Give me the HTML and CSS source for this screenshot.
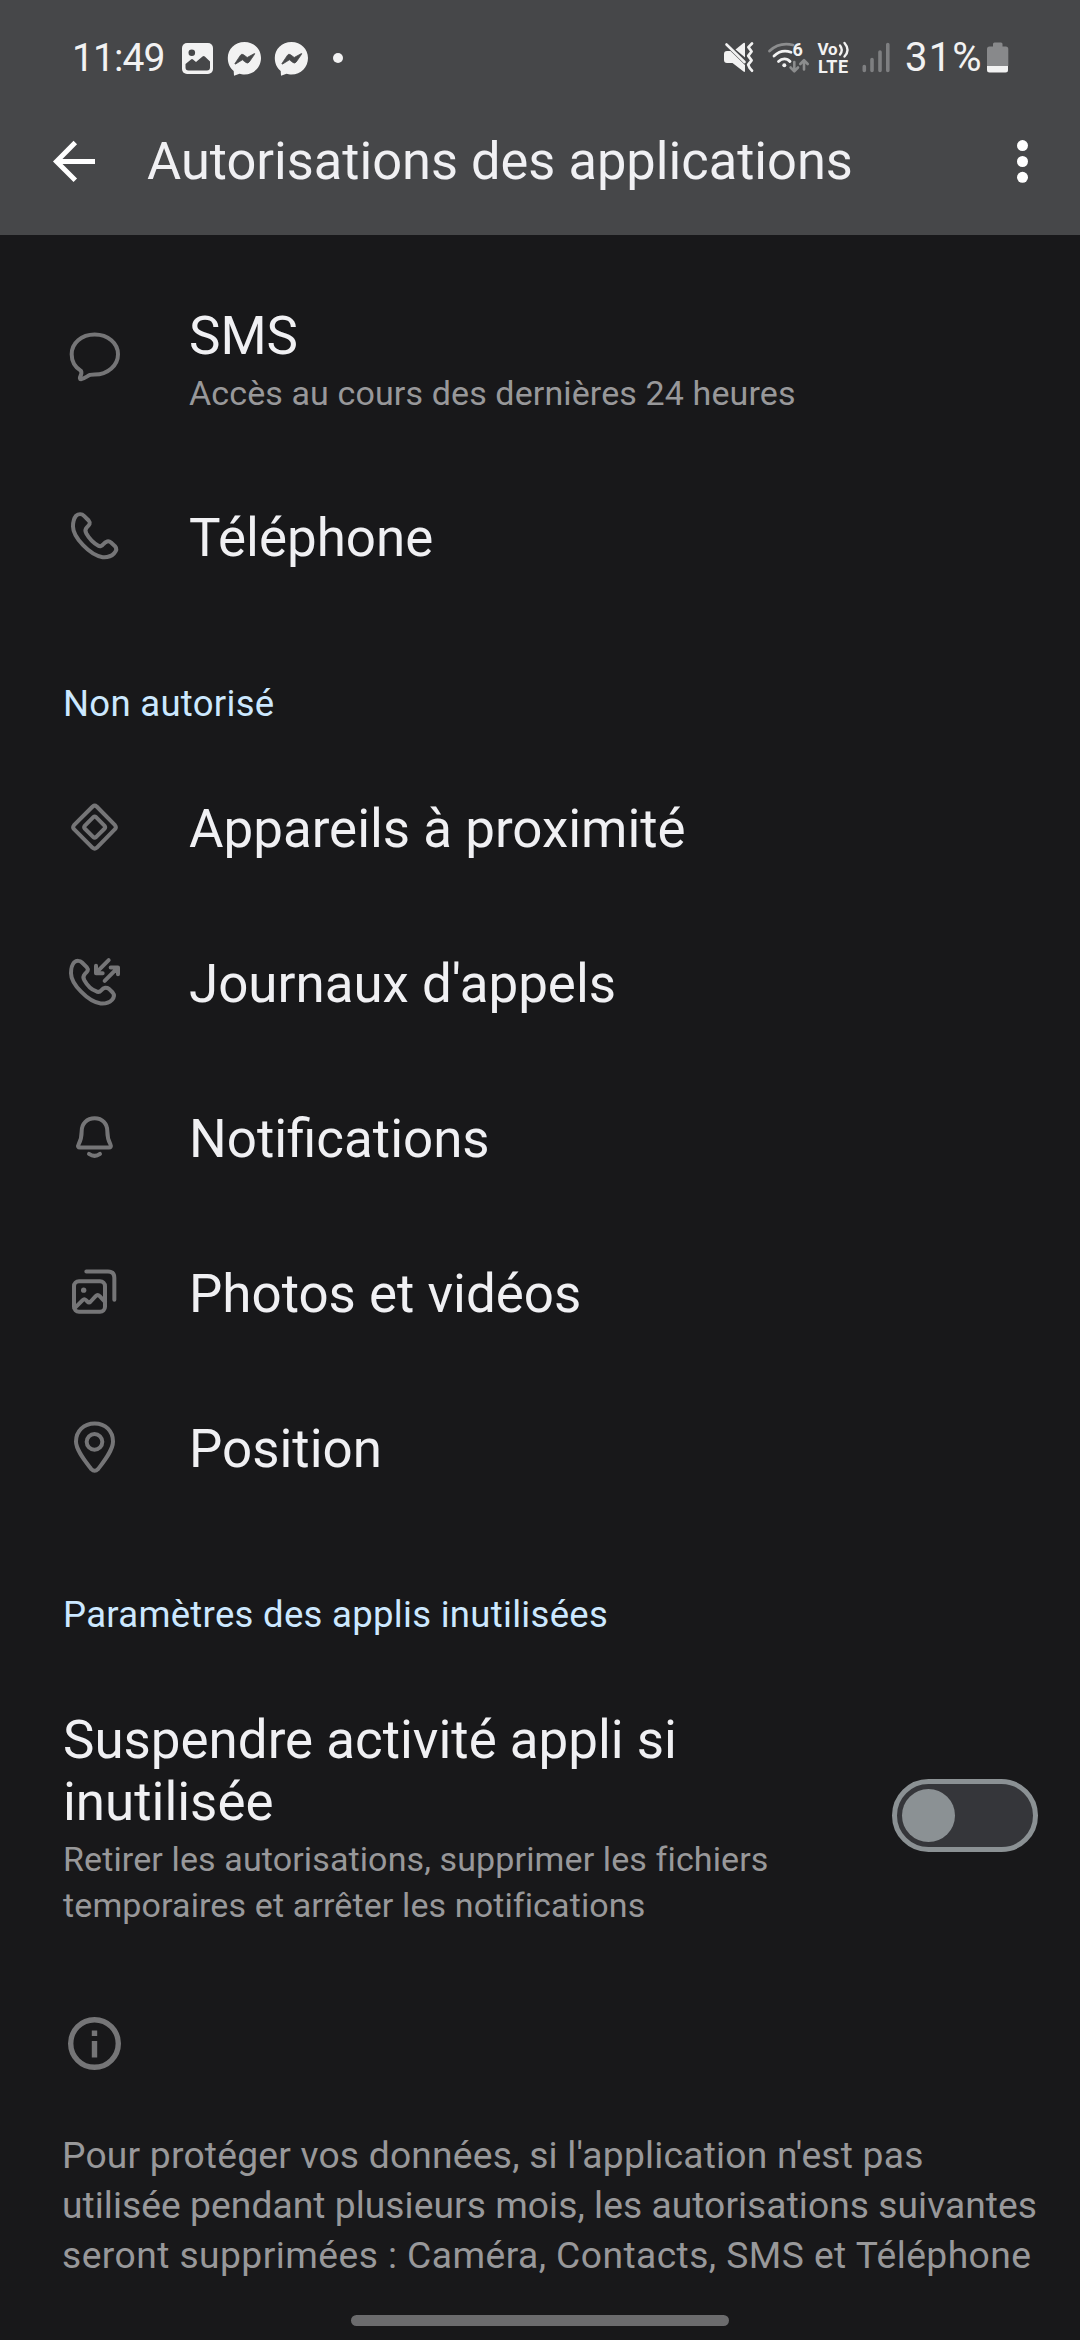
FILE: index.html
```html
<!DOCTYPE html>
<html lang="fr">
<head>
<meta charset="utf-8">
<title>Autorisations des applications</title>
<link rel="stylesheet" href="styles.css">
</head>
<body>
<header class="header">
  <div class="status">
    <div class="status-left">
      <span class="clock">11:49</span>
      <svg class="notif" viewBox="180 0 160 115" width="160" height="115">
        <rect x="182" y="43" width="31" height="31" rx="5" fill="#f2f2f2"/>
        <circle cx="191.8" cy="52.7" r="3.3" fill="#464749"/>
        <path d="M185.500 64l5.500-4.500q1-.8 2 0l3 2.600 6.500-5.700q1.200-1 2.300 0l5.200 5.100v6q0 3-3 3h-18.500q-3 0-3-3z" fill="#464749"/>
        <g id="bubble">
          <path d="M244.500 42c9.500 0 16.500 7 16.500 16s-7 16.500-16.500 16.500c-2 0-3.500-.2-5-.7l-5.500 2-.3-4.800c-3.700-3-5.900-7.500-5.900-13 0-9 7-16 16.700-16z" fill="#f2f2f2"/>
          <path d="M235 63.500l5.500-8.300q1.200-1.700 3-.5l3.700 2.800 7.300-4q.5 0 0 .8l-5.300 7.700q-1.400 1.800-3.200.5l-3.600-2.700-6.800 4.200q-.9.300-.6-.5z" fill="#464749" stroke="#464749" stroke-width=".8"/>
        </g>
        <use href="#bubble" x="47"/>
        <circle cx="338" cy="58" r="5" fill="#f2f2f2"/>
      </svg>
    </div>
    <div class="status-right">
      <svg class="signals" viewBox="720 0 176 115" width="176" height="115">
        <path d="M724 54q0-3 3-3h3.500l14.500 14v6q0 1.500-1.500.5L732.500 63H727q-3 0-3-3z" fill="#f2f2f2"/>
        <path d="M735.500 49.500l8-6.500q1.500-1 1.500.8V57.500z" fill="#f2f2f2"/>
        <path d="M726.500 44.500l18 17.500" stroke="#f2f2f2" stroke-width="2.600" stroke-linecap="round"/>
        <path d="M752 43.500l-3.600 3.600 3.200 4.400-3.400 4.400 3.400 4.400-3.400 4.400 1.600 3.500 2.200 2.500" fill="none" stroke="#f2f2f2" stroke-width="2.700" stroke-linecap="round" stroke-linejoin="round"/>
        <path d="M769.500 51c6.500-6 15-8 23.500-6" fill="none" stroke="#8c8d8e" stroke-width="2.800" stroke-linecap="round"/>
        <path d="M774 56c5-4.800 11.500-5.800 17-3.700M778.500 61.500c3.500-3.500 8.500-3.500 11.500 0" fill="none" stroke="#f2f2f2" stroke-width="2.800" stroke-linecap="round"/>
        <circle cx="784.300" cy="65.300" r="2" fill="#f2f2f2"/>
        <text class="glyph" x="792.500" y="56" font-size="18">6</text>
        <path d="M794.300 62v9m-3.700-3.500l3.700 3.800 3.700-3.800M804 69.500V61m-3.700 3l3.700-3.800 3.700 3.800" fill="none" stroke="#8c8d8e" stroke-width="2.600" stroke-linecap="round" stroke-linejoin="round"/>
        <text class="glyph" x="817.500" y="55" font-size="17" textLength="20">Vo</text>
        <path d="M840 45.500q3.500 4.500 0 9M844.500 43q6 7 0 13.500" fill="none" stroke="#f2f2f2" stroke-width="2.400" stroke-linecap="round"/>
        <text class="glyph" x="818" y="72.700" font-size="18" textLength="30">LTE</text>
        <path d="M864.300 66.500v4M872 59.500v11M880 52v18.500M887.800 44.500v26" stroke="#7e7f81" stroke-width="3.600" stroke-linecap="round"/>
      </svg>
      <span class="percent">31%</span>
      <svg class="battery" viewBox="986 0 24 115" width="24" height="115">
        <path d="M987 49q0-2.500 2.500-2.500h3.500V44q0-1.500 1.500-1.500h6.500q1.500 0 1.500 1.500v2.500h3.300q2.500 0 2.500 2.500v17H987z" fill="#88898b"/>
        <path d="M987 66h21v4q0 2.500-2.500 2.500h-16q-2.500 0-2.500-2.500z" fill="#f2f2f2"/>
      </svg>
    </div>
  </div>
  <div class="toolbar">
    <svg class="back" viewBox="50 139 48 45" width="48" height="45"><path d="M75.300 142.600L56.500 161.500l18.800 18.800M57 161.500h38" fill="none" stroke="#fff" stroke-width="5"/></svg>
    <h1 class="title">Autorisations des applications</h1>
    <svg class="more" viewBox="1016 139 13 45" width="13" height="45" fill="#fff"><circle cx="1022.500" cy="145.600" r="5.500"/><circle cx="1022.500" cy="161.500" r="5.500"/><circle cx="1022.500" cy="177.300" r="5.500"/></svg>
  </div>
</header>
<main>
  <section class="group">
    <div class="row row-tall">
      <svg class="icon" viewBox="72 58.500 180 228"><path d="M164 132c40 0 70 26 70 59s-30 61-70 61c-7 0-10 0-14 1-9 4-17 12-27 13-4 0-4-4-2-8 3-6 5-11 2-17-18-11-28-28-28-50 0-33 29-59 69-59z"/></svg>
      <div class="text"><span class="label">SMS</span><span class="sub">Accès au cours des dernières 24 heures</span></div>
    </div>
    <div class="row">
      <svg class="icon" viewBox="72 628.500 180 228"><path d="M108 676C116 669 126 670 132 676L146 690C153 698 148 704 141 710C134 717 135 722 139 729C148 745 160 757 174 765C180 769 186 767 190 761C197 752 206 750 213 756L225 767C231 774 230 781 222 789C212 799 200 801 188 800C150 795 99 740 99 708C99 695 101 684 108 676Z"/></svg>
      <span class="label">Téléphone</span>
    </div>
  </section>
  <section class="group">
    <h2 class="section">Non autorisé</h2>
    <div class="row">
      <svg class="icon" viewBox="72 391.500 180 228"><path d="M158 438q6-5 12 0l55 56q5 6 0 12l-55 56q-6 5-12 0l-56-56q-5-6 0-12zM160 470q4-3 8 0l26 26q3 4 0 8l-26 26q-4 3-8 0l-26-26q-3-4 0-8z"/></svg>
      <span class="label">Appareils à proximité</span>
    </div>
    <div class="row">
      <svg class="icon" viewBox="72 856.500 180 228"><path d="M102 906C110 899 120 900 126 906L140 920C147 928 142 934 135 940C128 947 129 952 133 959C142 975 154 987 168 992C174 996 180 994 184 989C191 980 200 980 207 985L218 996C224 1003 223 1010 216 1018C206 1028 194 1030 182 1029C144 1024 93 970 93 938C93 925 95 914 102 906Z"/><path d="M206 899l-38 38M168 916v22h20M194 961l38-38M212 921h22v20"/></svg>
      <span class="label">Journaux d'appels</span>
    </div>
    <div class="row">
      <svg class="icon" viewBox="72 61.500 180 228"><path d="M164 113c23 0 38 16 38 39 0 20 3 28 9 39 4 8 0 10-4 10h-87c-5 0-8-3-4-10 6-11 9-19 9-39 0-23 16-39 39-39zM147 220q17 12 33 0"/></svg>
      <span class="label">Notifications</span>
    </div>
    <div class="row">
      <svg class="icon" viewBox="72 526.500 180 228"><rect x="102" y="602" width="93" height="92" rx="15"/><path d="M139 573h65q19 0 19 19v66M104 683l24-24q5-5 10 0l4 4q5 5 10 0l15-16q6-6 12 0l16 17"/><circle class="solid" cx="131" cy="629" r="8"/></svg>
      <span class="label">Photos et vidéos</span>
    </div>
    <div class="row">
      <svg class="icon" viewBox="72 991.500 180 228"><path d="M164 1029c33 0 55 23 55 54 0 26-26 58-45 83q-10 10-20 0c-19-25-46-57-46-83 0-31 23-54 56-54z"/><circle cx="163.500" cy="1084" r="23.500"/></svg>
      <span class="label">Position</span>
    </div>
  </section>
  <section class="group">
    <h2 class="section">Paramètres des applis inutilisées</h2>
    <div class="switch-row">
      <div class="text">
        <span class="label">Suspendre activité appli si<br>inutilisée</span>
        <span class="sub">Retirer les autorisations, supprimer les fichiers<br>temporaires et arrêter les notifications</span>
      </div>
      <div class="toggle" role="switch" aria-checked="false"><span class="knob"></span></div>
    </div>
  </section>
  <footer class="info">
    <svg class="info-icon" viewBox="0 0 53 53" width="53" height="53"><circle cx="26.500" cy="26.500" r="23.800" fill="none" stroke="#757577" stroke-width="5.400"/><path d="M23.800 13.500h5.400v5.400h-5.400zM23.800 24h5.400v16.500h-5.400z" fill="#757577"/></svg>
    <p class="info-text"><span class="line line-1">Pour protéger vos données, si l'application n'est pas</span> <span class="line line-2">utilisée pendant plusieurs mois, les autorisations suivantes</span> <span class="line line-3">seront supprimées : Caméra, Contacts, SMS et Téléphone</span></p>
  </footer>
</main>
<div class="nav"></div>
</body>
</html>
```
FILE: styles.css
```css
* { box-sizing: border-box; }

body {
  margin: 0;
  width: 1080px;
  height: 2340px;
  overflow: hidden;
  display: flex;
  flex-direction: column;
  background: #18181a;
  color: #f0f0f3;
  font-family: Roboto, sans-serif;
}

svg { display: block; flex: none; }

.header { height: 235px; flex: none; background: #464749; }
.status {
  height: 115px;
  display: flex;
  justify-content: space-between;
  padding: 0 70px 0 72px;
  color: #f2f2f2;
}
.status-left, .status-right { display: flex; align-items: center; }
.clock { width: 108px; font-size: 39px; line-height: 46px; letter-spacing: -0.9px; }
.notif { overflow: visible; }
.percent { width: 81px; margin-left: 9px; font-size: 40px; line-height: 46px; letter-spacing: 1.2px; }
.glyph { font-family: Roboto, sans-serif; font-weight: 700; fill: #f2f2f2; }

.toolbar { height: 93px; display: flex; align-items: center; padding: 0 51px 0 50px; }
.title { margin: 0 auto 2px 49px; font-size: 52.4px; font-weight: 400; line-height: 62px; }

.group { display: flex; flex-direction: column; }
.row { height: 155px; display: flex; align-items: center; gap: 65px; padding-left: 64px; }
.row-tall { height: 225px; }
.icon {
  width: 60px;
  height: 76px;
  fill: none;
  stroke: #757577;
  stroke-width: 12px;
  stroke-linecap: round;
  stroke-linejoin: round;
}
.solid { fill: #757577; stroke: none; }

.text { display: flex; flex-direction: column; gap: 3px; }
.row-tall .text { padding-top: 26px; }
.label { font-size: 52.9px; line-height: 62px; }
.sub { font-size: 34px; line-height: 46px; letter-spacing: 0.12px; color: #98989a; }

.section {
  height: 136px;
  margin: 0;
  padding: 67px 63px 0;
  font-size: 36.5px;
  font-weight: 400;
  line-height: 44px;
  letter-spacing: 0.3px;
  color: #cce8ff;
}

.switch-row {
  height: 313px;
  display: flex;
  justify-content: space-between;
  align-items: flex-start;
  padding: 47px 42px 0 63px;
}
.toggle {
  width: 146px;
  height: 73px;
  margin-top: 70px;
  padding: 5px;
  border: 5px solid #8b9194;
  border-radius: 37px;
  background: #35363a;
}
.knob { display: block; width: 53px; height: 53px; border-radius: 50%; background: #8b9194; }

.info { padding: 42px 0 0 62px; }
.info-icon { margin-left: 6px; }
.info-text { margin: 60px 0 0; font-size: 37.2px; line-height: 50px; color: #98989a; }
.line { display: block; white-space: nowrap; }
.line-1 { letter-spacing: 0.22px; }
.line-2 { letter-spacing: 0.05px; }
.line-3 { letter-spacing: 0.45px; }

.nav {
  width: 378px;
  height: 11px;
  margin: auto auto 14px;
  border-radius: 6px;
  background: #6b6b6d;
}
```
